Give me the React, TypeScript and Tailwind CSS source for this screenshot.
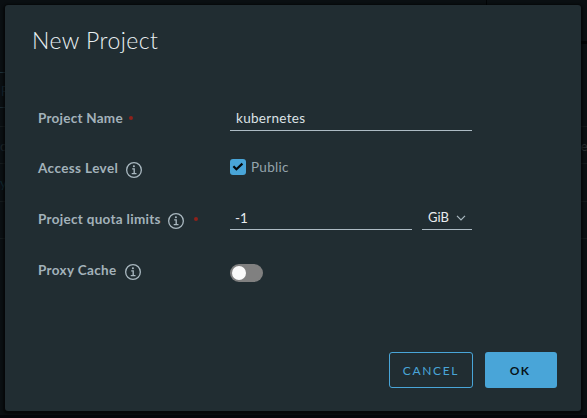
import { useState } from "react";

function InfoIcon() {
  return (
    <svg viewBox="0 0 16 16" className="h-4 w-4 shrink-0" fill="none" stroke="#a9b8c0">
      <circle cx="8" cy="8" r="7.35" strokeWidth="1.3" />
      <path d="M6.2 6.9h2v4.6M5.7 11.6h4.8" strokeWidth="1.35" />
      <circle cx="7.9" cy="4.3" r="1.05" fill="#a9b8c0" stroke="none" />
    </svg>
  );
}

function Required({ className }: { className: string }) {
  return <span className={`h-[4px] w-[4px] shrink-0 rounded-full bg-[#8e211b] ${className}`} />;
}

function Backdrop() {
  return (
    <div className="absolute inset-0 bg-[#0a0f12] text-[13px] leading-4 text-[#1b2428]">
      <div className="absolute top-0 left-[486px] h-[5px] w-px bg-[#020405]" />
      <div className="absolute top-[72px] left-0 h-px w-[5px] bg-[#1d3038]" />
      <div className="absolute top-[83px] left-[1px] text-[#15262e]">P</div>
      <div className="absolute top-[107px] left-0 h-px w-[5px] bg-[#1a2930]" />
      <div className="absolute top-[126px] left-0 h-px w-full bg-[#141a1c]" />
      <div className="absolute top-[138px] left-0">c</div>
      <div className="absolute top-[163px] left-0 h-px w-full bg-[#141a1c]" />
      <div className="absolute top-[175px] left-0 text-[#10262e]">y</div>
      <div className="absolute top-[201px] left-0 h-px w-full bg-[#141a1c]" />
      <div className="absolute top-[238px] left-0 h-px w-full bg-[#141a1c]" />
      <div className="absolute top-[41px] right-0 h-[3px] w-[6px] bg-[#020405]" />
      <div className="absolute top-[138px] left-[576px] text-[#293033]">te</div>
      <div className="absolute bottom-0 left-0 h-[3px] w-full bg-[#04060b]" />
    </div>
  );
}

export default function App() {
  const [isPublic, setPublic] = useState(true);
  const [proxy, setProxy] = useState(false);
  const label = "flex h-5 w-[192px] shrink-0 items-center text-[13.5px] font-bold text-[#a3b2ba]";
  return (
    <div className="relative h-[418px] w-[587px] overflow-hidden font-['Lato','Open_Sans',sans-serif]">
      <Backdrop />
      <div className="relative h-full pt-[5px] pr-[6px] pb-[7px] pl-[5px]">
        <div className="flex h-[406px] flex-col rounded-[3px] bg-[#212d32] shadow-[0_1px_2px_2px_rgba(0,0,0,0.5)]">
          <h1 className="mt-[20px] ml-[27px] h-[30px] text-[23px] leading-[30px] font-light tracking-[0.45px] whitespace-nowrap text-[#eaf1f4]">
            New Project
          </h1>
          <div className="mt-[49px] ml-[33px] flex flex-col">
            <div className="flex h-[51px] items-start">
              <div className={`${label} mt-[4px]`}>
                <span className="tracking-[0.25px]">Project Name</span>
                <Required className="-mt-px ml-[6px]" />
              </div>
              <input
                defaultValue="kubernetes"
                className="h-[27px] w-[242px] border-b border-[#adbbc4] bg-transparent px-[6px] pt-[2px] text-[13.5px] tracking-[0.3px] text-[#dde3e7] outline-none"
              />
            </div>
            <div className="flex h-[51px] items-start">
              <div className={`${label} mt-[3px] gap-2`}>
                <span className="tracking-[0.4px]">Access Level</span>
                <span className="mt-[4px]"><InfoIcon /></span>
              </div>
              <button onClick={() => setPublic(!isPublic)} className="mt-[2px] flex h-5 items-center gap-[5px] text-[13.5px] text-[#95a4ac]">
                <span className="flex h-4 w-4 items-center justify-center rounded-[3px] bg-[#49a5d8]">
                  {isPublic && (
                    <svg viewBox="0 0 16 16" className="h-4 w-4" fill="none" stroke="#05090b" strokeWidth="2.2">
                      <path d="M3.4 7.3l3 3 6-5.7" />
                    </svg>
                  )}
                </span>
                <span className="tracking-[0.3px]">Public</span>
              </button>
            </div>
            <div className="flex h-[51px] items-start">
              <div className={`${label} mt-[3px]`}>
                <span className="tracking-[0.3px]">Project quota limits</span>
                <span className="mt-[4px] ml-[7px]"><InfoIcon /></span>
                <Required className="-mt-px ml-[10px]" />
              </div>
              <input
                defaultValue="-1"
                className="h-[24px] w-[182px] border-b border-[#adbbc4] bg-transparent px-[5px] text-[13.5px] text-[#e9ecef] outline-none"
              />
              <button className="ml-[10px] flex h-[24px] w-[50px] items-center border-b border-[#adbbc4] pl-[6px] text-[13px] text-[#e9ecef]">
                <span>GiB</span>
                <svg viewBox="0 0 10 6" className="ml-[7px] h-[6px] w-[10px]" fill="none" stroke="#a9b8c0" strokeWidth="1.2">
                  <path d="M1 .8l4 4 4-4" />
                </svg>
              </button>
            </div>
            <div className="flex h-[51px] items-start">
              <div className={`${label} mt-[3px] gap-2`}>
                <span className="tracking-[0.35px]">Proxy Cache</span>
                <span className="mt-[4px]"><InfoIcon /></span>
              </div>
              <button
                onClick={() => setProxy(!proxy)}
                className={`mt-[7px] flex h-[18px] w-[33px] items-center rounded-full bg-[#808080] px-[2px] ${proxy ? "justify-end" : "justify-start"}`}
              >
                <span className="h-[14px] w-[14px] rounded-full bg-[#fafafa]" />
              </button>
            </div>
          </div>
          <div className="mt-auto mr-[24px] mb-[23px] flex justify-end gap-3">
            <button className="h-9 w-[84px] rounded-[3px] border border-[#49a5d8] pt-[2px] text-[12px] tracking-[1.65px] text-[#49a5d8]">
              CANCEL
            </button>
            <button className="h-9 w-[72px] rounded-[3px] bg-[#49a5d8] pt-[2px] pr-[2px] text-[12px] font-bold tracking-[1.4px] text-[#081419]">OK</button>
          </div>
        </div>
      </div>
    </div>
  );
}
